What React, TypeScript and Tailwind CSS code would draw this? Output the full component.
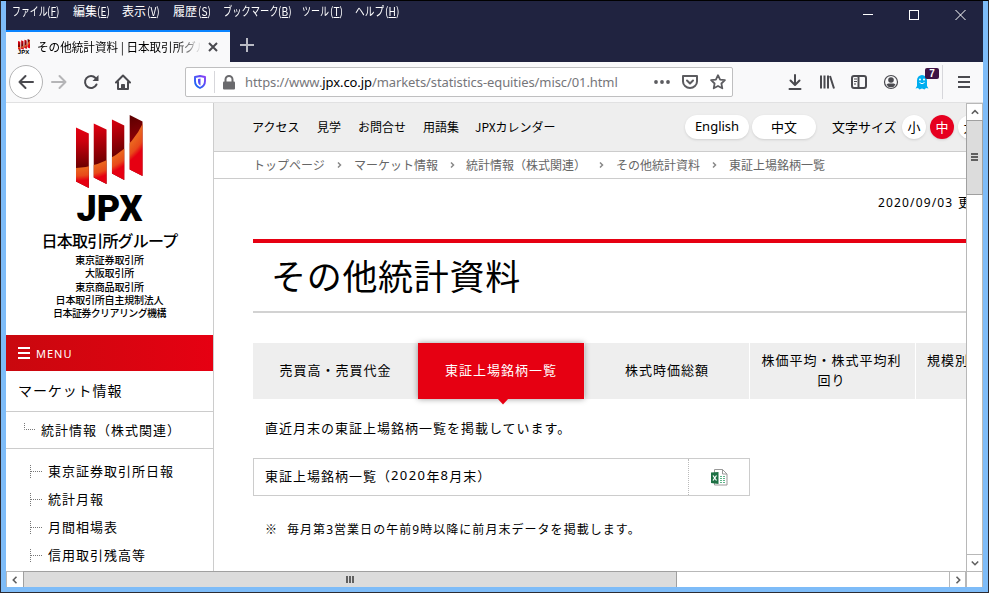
import React from "react";

const MENUS = [
  { label: "ファイル", key: "F", box: "w-[61px]", text: "scale-x-[.74]", inner: "w-[35px]" },
  { label: "編集", key: "E", box: "w-[49px]", text: "", inner: "w-[24px]" },
  { label: "表示", key: "V", box: "w-[51px]", text: "", inner: "w-[25px]" },
  { label: "履歴", key: "S", box: "w-[50px]", text: "", inner: "w-[25px]" },
  { label: "ブックマーク", key: "B", box: "w-[79px]", text: "scale-x-[.77]", inner: "w-[55px]" },
  { label: "ツール", key: "T", box: "w-[53px]", text: "scale-x-[.75]", inner: "w-[28px]" },
  { label: "ヘルプ", key: "H", box: "w-[50px]", text: "scale-x-[.81]", inner: "w-[30px]" },
];

const NAV_LINKS = [
  { label: "アクセス", box: "w-[65px]" },
  { label: "見学", box: "w-[41px]" },
  { label: "お問合せ", box: "w-[65px]" },
  { label: "用語集", box: "w-[52px]" },
];

const SIDE_ITEMS = ["東京証券取引所日報", "統計月報", "月間相場表", "信用取引残高等"];

const GROUP_COMPANIES = [
  "東京証券取引所",
  "大阪取引所",
  "東京商品取引所",
  "日本取引所自主規制法人",
  "日本証券クリアリング機構",
];

function LogoBars({ className }: { className?: string }) {
  return (
    <svg className={className} viewBox="0 0 68 73" preserveAspectRatio="none">
      <defs>
        <linearGradient id="dark" x1="0" y1="12" x2="0" y2="53" gradientUnits="userSpaceOnUse">
          <stop offset="0" stopColor="#e60012" />
          <stop offset="0.35" stopColor="#cc000e" />
          <stop offset="1" stopColor="#6a0000" />
        </linearGradient>
        <linearGradient id="dark2" x1="18" y1="8" x2="26" y2="50" gradientUnits="userSpaceOnUse">
          <stop offset="0" stopColor="#e60012" />
          <stop offset="1" stopColor="#6a0000" />
        </linearGradient>
        <linearGradient id="dark3" x1="36" y1="4" x2="49" y2="40" gradientUnits="userSpaceOnUse">
          <stop offset="0" stopColor="#dc000f" />
          <stop offset="1" stopColor="#640000" />
        </linearGradient>
        <linearGradient id="dark4" x1="54" y1="0" x2="62" y2="24" gradientUnits="userSpaceOnUse">
          <stop offset="0" stopColor="#5a0000" />
          <stop offset="1" stopColor="#8c0006" />
        </linearGradient>
        <radialGradient id="low" cx="-2" cy="-25" r="100" gradientUnits="userSpaceOnUse">
          <stop offset="0.79" stopColor="#ea641f" />
          <stop offset="0.86" stopColor="#e84a1a" />
          <stop offset="0.91" stopColor="#e60012" />
        </radialGradient>
        <clipPath id="under">
          <path d="M0 53A78 78 0 0 0 68 8V73H0Z" />
        </clipPath>
      </defs>
      <path d="M0 12.500 13 18.500V73L0 66.500Z" fill="url(#dark)" />
      <path d="M18 8.500 31 14.500V69L18 62.500Z" fill="url(#dark2)" />
      <path d="M36.500 4.500 49 10.500V65L36.500 58.500Z" fill="url(#dark3)" />
      <path d="M54.500 0 67.500 6.500V61L54.500 54.500Z" fill="url(#dark4)" />
      <g clipPath="url(#under)" fill="url(#low)">
        <path d="M0 51 13 51V73L0 66.500Z" />
        <path d="M18 44 31 44V69L18 62.500Z" />
        <path d="M36.500 34H49V65L36.500 58.500Z" />
        <path d="M54.500 6H67.500V61L54.500 54.500Z" />
      </g>
    </svg>
  );
}

function Toolbar() {
  return (
    <div className="flex h-[41px] items-center border-b border-[#e1e1e2] bg-[#f9f9fa] text-[#4a4a4f]">
      <div className="ml-[3px] flex h-[34px] w-[34px] shrink-0 items-center justify-center rounded-full border border-[#b4b4b5] bg-white">
        <svg width="16" height="16" viewBox="0 0 16 16" fill="none" stroke="currentColor" strokeWidth="2" strokeLinecap="round" strokeLinejoin="round">
          <path d="M15 8H1.500M7.500 2 1.500 8l6 6" />
        </svg>
      </div>
      <svg className="ml-2 shrink-0 text-[#b5b5b7]" width="16" height="16" viewBox="0 0 16 16" fill="none" stroke="currentColor" strokeWidth="2" strokeLinecap="round" strokeLinejoin="round">
        <path d="M1 8h13.500M8.500 2l6 6-6 6" />
      </svg>
      <svg className="ml-4 shrink-0" width="16" height="16" viewBox="0 0 16 16" fill="none" stroke="currentColor" strokeWidth="2">
        <path d="M12.500 4A6 6 0 1 0 13.500 10.500" strokeLinecap="round" />
        <path d="M15.500 1v6h-6Z" fill="currentColor" stroke="none" />
      </svg>
      <svg className="ml-4 shrink-0" width="16" height="16" viewBox="0 0 16 16" fill="none" stroke="currentColor" strokeWidth="2" strokeLinejoin="round" strokeLinecap="round">
        <path d="M1 8.500 8 1.500l7 7M3 8v7h10V8" />
        <path d="M6.500 15v-4.500h3V15" fill="currentColor" strokeWidth="1" />
      </svg>

      <div className="ml-[54px] flex h-[30px] w-[548px] shrink-0 items-center rounded-[2px] border border-[#bfbfc0] bg-white">
        <svg className="ml-2 shrink-0" width="12" height="14" viewBox="0 0 12 14" fill="none">
          <defs>
            <linearGradient id="shield" x1="0" y1="1" x2="1" y2="0">
              <stop offset="0" stopColor="#0a6cf5" />
              <stop offset="1" stopColor="#8a3df5" />
            </linearGradient>
          </defs>
          <path d="M6 1 11 2v4c0 3.500-2 5.700-5 7C3 11.700 1 9.500 1 6V2Z" stroke="url(#shield)" strokeWidth="1.900" strokeLinejoin="round" />
          <path d="M6.500 3.500v7C4.600 9.500 4 8 4 6V4Z" fill="#5a4df5" />
        </svg>
        <div className="ml-2 h-[22px] w-px bg-[#d7d7db]" />
        <svg className="ml-[7px] shrink-0 text-[#6a6a6d]" width="14" height="15" viewBox="0 0 14 15">
          <path d="M3.500 7V4.500a3.500 3.500 0 0 1 7 0V7" fill="none" stroke="currentColor" strokeWidth="2" />
          <rect x="1" y="6.500" width="12" height="8" rx="1" fill="currentColor" />
        </svg>
        <div className="ml-[9px] mt-[2px] w-[408px] whitespace-nowrap font-['Noto_Sans'] text-[13px] tracking-[-0.090px] text-[#76767a]">
          https://www.<span className="text-black">jpx.co.jp</span>/markets/statistics-equities/misc/01.html
        </div>
        <svg className="ml-px shrink-0 text-[#5c5c60]" width="16" height="16" viewBox="0 0 16 16" fill="currentColor">
          <circle cx="2" cy="8" r="1.900" />
          <circle cx="8" cy="8" r="1.900" />
          <circle cx="14" cy="8" r="1.900" />
        </svg>
        <svg className="ml-3 shrink-0 text-[#5c5c60]" width="16" height="16" viewBox="0 0 16 16" fill="none" stroke="currentColor" strokeWidth="2" strokeLinecap="round" strokeLinejoin="round">
          <path d="M1 2h14v5.500a7 6.500 0 0 1-14 0Z" />
          <path d="m5 6.500 3 3 3-3" />
        </svg>
        <svg className="ml-3 shrink-0 text-[#5c5c60]" width="16" height="16" viewBox="0 0 16 16" fill="none" stroke="currentColor" strokeWidth="1.800" strokeLinejoin="round">
          <path d="m8 1.200 2.100 4.400 4.800.6-3.500 3.300.9 4.800L8 12l-4.300 2.300.9-4.800L1.100 6.200l4.800-.6Z" />
        </svg>
      </div>

      <svg className="ml-[54px] shrink-0" width="16" height="16" viewBox="0 0 16 16" fill="none" stroke="currentColor" strokeWidth="2" strokeLinecap="round" strokeLinejoin="round">
        <path d="M8 1v9.500M3.500 6.500 8 11l4.500-4.500M2.500 15h11" />
      </svg>
      <svg className="ml-4 shrink-0" width="16" height="16" viewBox="0 0 16 16" fill="none" stroke="currentColor" strokeWidth="2">
        <path d="M2 1.500v13M5.500 1.500v13M9 1.500v13M11 2l4 12.500" />
      </svg>
      <svg className="ml-4 shrink-0" width="16" height="16" viewBox="0 0 16 16" fill="none" stroke="currentColor" strokeWidth="2">
        <rect x="1" y="2" width="14" height="12" rx="2" />
        <path d="M7.500 2v12" />
        <path d="M3 5h3M3 7.500h3M3 10h2" strokeWidth="1" />
      </svg>
      <svg className="ml-4 shrink-0" width="16" height="16" viewBox="0 0 16 16">
        <circle cx="8" cy="8" r="6.500" fill="none" stroke="currentColor" strokeWidth="1.200" />
        <circle cx="8" cy="6" r="2.800" fill="currentColor" />
        <path d="M3.500 10.500C5 9 6 9.500 8 9.500s3-.5 4.500 1A5 5 0 0 1 3.500 10.500Z" fill="currentColor" />
      </svg>
      <div className="relative ml-4 h-4 w-4 shrink-0">
        <svg width="14" height="16" viewBox="0 0 14 16">
          <path d="M2 12V6.500a5 5.500 0 0 1 10 0V12l1.500 2.500-2.500-.5-1.500 1.500-2.500-1-2.500 1L3 14l-2.500.5Z" fill="#00aef0" />
          <circle cx="5" cy="5.500" r="1" fill="#fff" />
          <circle cx="9" cy="5.500" r="1" fill="#fff" />
          <path d="M4.500 8.500Q7 11 9.500 8.500" fill="none" stroke="#fff" />
        </svg>
        <span className="absolute left-[10px] top-[-6px] h-[11px] w-[14px] rounded-[2px] bg-[#3f1345] text-center font-['Liberation_Sans'] text-[10px] font-bold leading-[11px] text-white">
          7
        </span>
      </div>
      <div className="ml-[11px] h-[34px] w-px bg-[#d7d7db]" />
      <svg className="ml-[14px] shrink-0" width="14" height="14" viewBox="0 0 14 14" fill="none" stroke="currentColor" strokeWidth="2">
        <path d="M1 2h12M1 7h12M1 12h12" />
      </svg>
    </div>
  );
}

function TitleBar() {
  return (
    <div className="flex h-[61px] shrink-0 flex-col bg-[#202340]">
      <div className="flex h-[29px] items-start justify-between">
        <div className="flex pl-[6px] pt-px text-[12px] leading-[18px] text-white">
          {MENUS.map((m) => (
            <div key={m.key} className={`flex shrink-0 whitespace-nowrap ${m.box}`}>
              <span className={`shrink-0 ${m.inner}`}>
                <span className={`inline-block origin-left ${m.text}`}>{m.label}</span>
              </span>
              <span className="inline-block origin-left scale-x-[.85]">
                (<u>{m.key}</u>)
              </span>
            </div>
          ))}
        </div>
        <svg className="mr-4 mt-2" width="104" height="12" viewBox="0 0 104 12" fill="none" stroke="#fff" shapeRendering="crispEdges">
          <path d="M0 5.500h10" />
          <rect x="46.500" y="1.500" width="9" height="9" />
          <path d="m92.500 1 10 10m0-10-10 10" shapeRendering="auto" />
        </svg>
      </div>
      <div className="flex h-8 items-stretch">
        <div className="flex w-[224px] items-center border-t-2 border-[#0a84ff] bg-[#f9f9fa]">
          <div className="ml-[11px] flex w-[13px] flex-col items-center">
            <LogoBars className="h-[11px] w-[12px]" />
            <span className="font-['Liberation_Sans'] text-[6px] font-bold leading-[5px]">JPX</span>
          </div>
          <div className="ml-[7px] w-[165px] overflow-hidden whitespace-nowrap text-[12px] leading-5 [mask-image:linear-gradient(to_right,#000_84%,transparent)]">
            <span className="inline-block origin-left scale-x-[.965]">その他統計資料 | 日本取引所グル</span>
          </div>
          <svg className="ml-[6px]" width="10" height="10" viewBox="0 0 10 10" stroke="#4a4a4f" strokeWidth="2">
            <path d="m1 1 8 8m0-8-8 8" />
          </svg>
        </div>
        <svg className="ml-[10px] mt-2" width="14" height="14" viewBox="0 0 14 14" stroke="#b9bac4" strokeWidth="2">
          <path d="M7 0v14M0 7h14" />
        </svg>
      </div>
    </div>
  );
}

function Sidebar() {
  return (
    <aside className="flex h-full w-[208px] shrink-0 flex-col border-r border-[#ccc] bg-white">
      <div className="flex h-[232px] shrink-0 flex-col items-center whitespace-nowrap pt-3">
        <LogoBars className="h-[73px] w-[67px]" />
        <div className="mt-[4px] h-[34px] font-['Roboto'] text-[36px] font-black leading-[34px]">JPX</div>
        <div className="mt-[6px] h-[17px] text-[16px] font-medium leading-[17px] tracking-[-0.800px]">日本取引所グループ</div>
        <div className="mt-[4px] text-center text-[10px] font-medium leading-[13.300px] tracking-[-0.200px]">
          {GROUP_COMPANIES.map((name) => (
            <div key={name} className="last:tracking-[-0.600px]">{name}</div>
          ))}
        </div>
      </div>
      <div className="flex h-9 shrink-0 items-center bg-gradient-to-r from-[#c9080e] to-[#e60012] pl-3 text-white">
        <svg width="12" height="12" viewBox="0 0 12 12" stroke="#fff" strokeWidth="2">
          <path d="M0 1h12M0 6h12M0 11h12" />
        </svg>
        <span className="ml-[6px] mt-[2px] font-['Noto_Sans'] text-[11px] tracking-[1px]">MENU</span>
      </div>
      <div className="flex h-[41px] shrink-0 items-center border-b border-[#ccc] pb-[2px] pl-[12px] text-[14px] tracking-[0.9px]">
        マーケット情報
      </div>
      <div className="flex h-[37px] shrink-0 items-center border-b border-[#ccc] pb-px pl-[18px] text-[13px] tracking-[1px]">
        <svg className="-mt-[5px]" width="12" height="8" viewBox="0 0 12 8" fill="none" stroke="#777" strokeDasharray="1 1">
          <path d="M.5 0v6.500H12" />
        </svg>
        <span className="ml-[5px] whitespace-nowrap">統計情報（株式関連）</span>
      </div>
      <div className="pt-[8px]">
        {SIDE_ITEMS.map((item) => (
          <div key={item} className="flex h-7 items-center pl-6 text-[13px] tracking-[1px]">
            <svg width="12" height="13" viewBox="0 0 12 13" fill="none" stroke="#777" strokeDasharray="1 1">
              <path d="M.5 0v13M1 6.500h11" />
            </svg>
            <span className="ml-[6px]">{item}</span>
          </div>
        ))}
      </div>
    </aside>
  );
}

function Crumb() {
  return (
    <svg className="shrink-0" width="5" height="6" viewBox="0 0 5 6" fill="none" stroke="#888" strokeWidth="1.500">
      <path d="m1 .5 2.500 2.500L1 5.500" />
    </svg>
  );
}

function ExcelIcon() {
  return (
    <svg width="17" height="17" viewBox="0 0 17 17">
      <path d="M3.500 .5h8l4.500 4.500v11H3.500Z" fill="#fff" stroke="#999" />
      <path d="M11.500 .5v4.500H16" fill="none" stroke="#999" />
      <path d="M9 7.500h5M9 9.500h5M9 11.500h5M9 13.500h5" stroke="#5fb58a" strokeDasharray="2 1" />
      <path d="M0 3.500 7.500 3v12L0 14Z" fill="#1d7044" />
      <path d="m2 6.500 3.500 5m0-5-3.500 5" stroke="#fff" strokeWidth="1.300" />
    </svg>
  );
}

function Content() {
  return (
    <main className="min-w-0 flex-1 overflow-hidden whitespace-nowrap bg-white">
      <div className="flex h-[49px] items-center border-b border-[#ccc] bg-[#eee] pl-[38px] text-[12px]">
        {NAV_LINKS.map((n) => (
          <span key={n.label} className={`shrink-0 ${n.box}`}>{n.label}</span>
        ))}
        <span className="w-[210px] shrink-0">JPXカレンダー</span>
        <div className="flex h-6 w-16 shrink-0 items-center justify-center rounded-full bg-white font-['Noto_Sans'] text-[13px] shadow">English</div>
        <div className="ml-[3px] flex h-6 w-16 shrink-0 items-center justify-center rounded-full bg-white pb-px text-[13px] shadow">中文</div>
        <span className="ml-4 w-[70px] shrink-0 text-[13px]">文字サイズ</span>
        <div className="flex h-6 w-6 shrink-0 items-center justify-center rounded-full bg-white pb-px text-[13px] shadow">小</div>
        <div className="ml-1 flex h-6 w-6 shrink-0 items-center justify-center rounded-full bg-[#e60020] pb-px text-[13px] text-white shadow">中</div>
        <div className="ml-1 flex h-6 w-6 shrink-0 items-center justify-center rounded-full bg-white pb-px text-[13px] shadow">大</div>
      </div>

      <div className="flex h-[27px] items-center border-b border-[#ccc] pl-[39px] text-[12px] text-[#666]">
        <span className="w-[84px] shrink-0">トップページ</span>
        <Crumb />
        <span className="ml-3 w-[96px] shrink-0">マーケット情報</span>
        <Crumb />
        <span className="ml-[11px] w-[133px] shrink-0">統計情報（株式関連）</span>
        <Crumb />
        <span className="ml-[12px] w-[96px] shrink-0">その他統計資料</span>
        <Crumb />
        <span className="ml-[12px] shrink-0">東証上場銘柄一覧</span>
      </div>

      <div className="flex h-[60px] pl-[664px] pt-[14px] text-[13px] leading-5">
        <span className="w-[80px] shrink-0 font-['Noto_Sans'] text-[12px] tracking-[1.150px]">2020/09/03</span>
        <span className="-mt-px">更新</span>
      </div>

      <div className="ml-[39px]">
        <h1 className="flex h-[74px] items-center border-b-2 border-t-4 border-b-[#d2d2d2] border-t-[#e60012] pb-[3px] pl-[18px] text-[35px] font-normal tracking-[0.700px]">
          その他統計資料
        </h1>

        <div className="mt-[30px] flex h-14 text-[13px] leading-5 tracking-[1px]">
          <div className="flex w-[165px] shrink-0 items-center justify-center bg-[#eee] pb-[2px]">売買高・売買代金</div>
          <div className="relative z-10 flex w-[166px] shrink-0 items-center justify-center bg-[#e60012] pb-[2px] text-white shadow-[0_0_6px_rgba(0,0,0,0.4)]">
            東証上場銘柄一覧
            <svg className="absolute left-[79px] top-[55px]" width="12" height="7" viewBox="0 0 12 7" fill="#e60012">
              <path d="M0 0h12L6 6.500Z" />
            </svg>
          </div>
          <div className="flex w-[166px] shrink-0 items-center justify-center border-x border-white bg-[#eee] pb-[2px]">株式時価総額</div>
          <div className="flex w-[165px] shrink-0 items-center justify-center bg-[#eee] pb-[2px] pr-[2px] text-center">
            株価平均・株式平均利
            <br />
            回り
          </div>
          <div className="ml-px w-[165px] shrink-0 bg-[#eee] pl-[11px] pt-[7px]">規模別・業種別</div>
        </div>

        <p className="pl-3 pt-[19px] text-[13px] leading-5 tracking-[1px]">
          直近月末の東証上場銘柄一覧を掲載しています。
        </p>

        <div className="mt-5 flex h-[38px] w-[497px] items-stretch border border-[#ccc] text-[13px] tracking-[1px]">
          <div className="flex w-[434px] items-center pb-[2px] pl-[11px]">
            東証上場銘柄一覧（<span className="font-['Noto_Sans'] tracking-[1.400px]">2020</span>年<span className="font-['Noto_Sans'] tracking-[1.400px]">8</span>月末）
          </div>
          <div className="flex flex-1 items-center justify-center border-l border-dotted border-[#bbb]">
            <ExcelIcon />
          </div>
        </div>

        <p className="flex pl-3 pt-[23px] text-[12px] leading-5 tracking-[1.040px]">
          <span className="w-[22px]">※</span>
          <span>
            毎月第<span className="font-['Noto_Sans']">3</span>営業日の午前<span className="font-['Noto_Sans']">9</span>時以降に前月末データを掲載します。
          </span>
        </p>
      </div>
    </main>
  );
}

function Arrow({ d }: { d: string }) {
  return (
    <svg width="8" height="8" viewBox="0 0 8 8" fill="none" stroke="#606060" strokeWidth="1.600">
      <path d={d} />
    </svg>
  );
}

function VerticalScrollbar() {
  return (
    <div className="flex w-[17px] shrink-0 flex-col border-x border-[#b8b8b8] bg-white">
      <div className="flex h-[17px] items-center justify-center border-t border-[#b8b8b8]">
        <Arrow d="m.8 5.800 3.200-3.200 3.200 3.200" />
      </div>
      <div className="-mx-px flex h-[75px] items-center justify-center border border-[#a0a0a0] bg-[#dcdcdc]">
        <svg className="-mt-[2px]" width="7" height="8" viewBox="0 0 7 8" stroke="#606060" strokeWidth="2">
          <path d="M0 1h7M0 4h7M0 7h7" />
        </svg>
      </div>
      <div className="flex-1" />
      <div className="flex h-[17px] items-center justify-center border-t border-[#b8b8b8]">
        <Arrow d="m.8 2.500 3.200 3.200 3.200-3.200" />
      </div>
    </div>
  );
}

function HorizontalScrollbar() {
  return (
    <div className="flex h-4 shrink-0 border-t border-[#b8b8b8] bg-white">
      <div className="flex w-[17px] items-center justify-center border-l border-[#b8b8b8]">
        <Arrow d="M5.500.8 2.300 4l3.200 3.200" />
      </div>
      <div className="-mt-px flex h-4 w-[654px] items-center justify-center border-x border-t border-[#a0a0a0] bg-[#dcdcdc]">
        <svg className="-ml-px" width="8" height="7" viewBox="0 0 8 7" stroke="#606060" strokeWidth="2">
          <path d="M1 0v7M4 0v7M7 0v7" />
        </svg>
      </div>
      <div className="flex-1" />
      <div className="flex w-[17px] items-center justify-center border-x border-[#b8b8b8]">
        <Arrow d="m2.500.8 3.200 3.200-3.200 3.200" />
      </div>
      <div className="w-[17px] border-x border-[#b8b8b8]" />
    </div>
  );
}

export default function App() {
  return (
    <div className="h-[593px] w-[989px] overflow-hidden border border-[#2b2b33] border-t-black bg-[#7ebcf8] px-[5px] pb-[5px] font-['Noto_Sans_CJK_JP',sans-serif] text-black">
      <div className="flex h-[586px] flex-col overflow-hidden">
        <TitleBar />
        <Toolbar />
        <div className="flex min-h-0 flex-1 overflow-hidden">
          <Sidebar />
          <Content />
          <VerticalScrollbar />
        </div>
        <HorizontalScrollbar />
      </div>
    </div>
  );
}
